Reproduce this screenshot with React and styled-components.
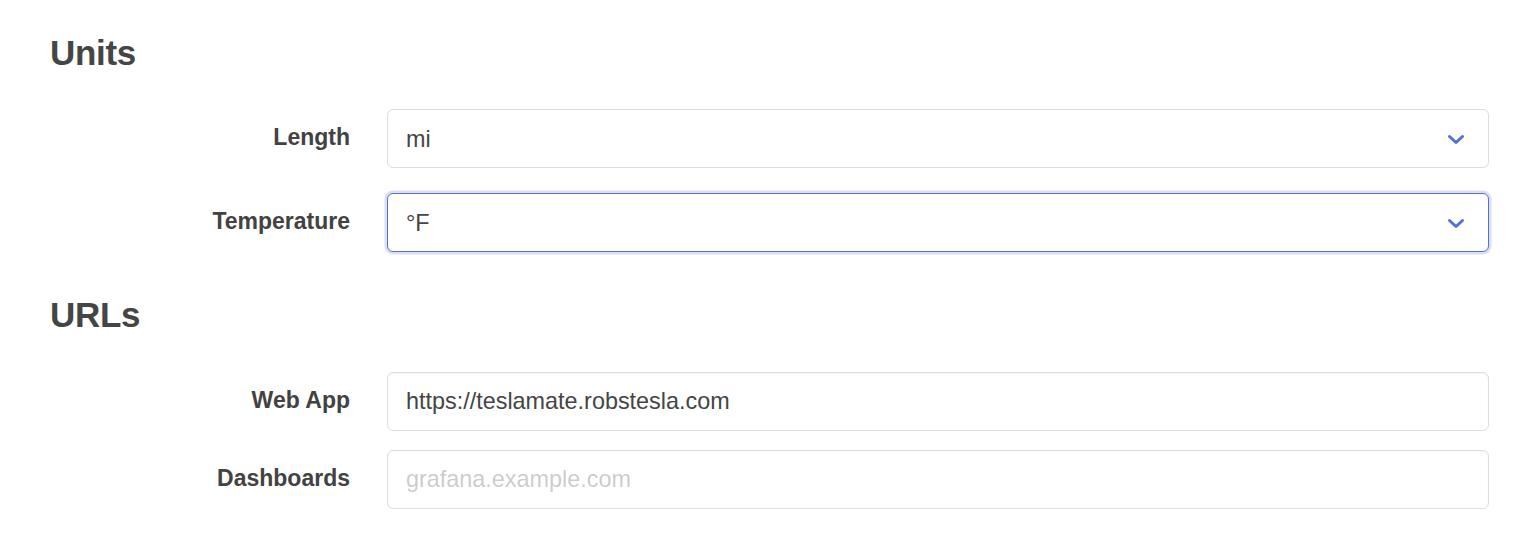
import React from 'react'
import styled, { createGlobalStyle } from 'styled-components'

const GlobalStyle = createGlobalStyle`
  html, body {
    margin: 0;
    padding: 0;
    background: #fff;
  }
  body {
    font-family: "Liberation Sans", Arial, Helvetica, sans-serif;
    color: #363636;
  }
  * {
    box-sizing: border-box;
  }
`

const Page = styled.main`
  padding: 33px 49px 0 50px;
`

const Section = styled.section`
  & + & {
    margin-top: 43px;
  }
`

const Title = styled.h2`
  margin: 0 0 37px 0;
  font-size: 35px;
  line-height: 1.125;
  font-weight: 700;
  color: #454545;
  letter-spacing: -0.3px;
`

const Field = styled.div`
  display: grid;
  grid-template-columns: 300px 1fr;
  column-gap: 37px;
  margin-bottom: ${(p) => p.$gap}px;

  &:last-child {
    margin-bottom: 0;
  }
`

const Label = styled.label`
  padding-top: 11px;
  text-align: right;
  font-size: 23px;
  line-height: 1.5;
  font-weight: 700;
  color: #424242;
`

const Control = styled.div`
  position: relative;
`

const baseBox = `
  display: block;
  width: 100%;
  height: 59px;
  margin: 0;
  padding: 0 18px;
  font-family: "Liberation Sans", Arial, Helvetica, sans-serif;
  font-size: 23.4px;
  color: #454545;
  background: #fff;
  border-radius: 6px;
  outline: none;
`

const Select = styled.select`
  ${baseBox}
  appearance: none;
  -webkit-appearance: none;
  border: 1px solid ${(p) => (p.$focused ? '#5a70d0' : '#dedede')};
  box-shadow: ${(p) => (p.$focused ? '0 0 0 2.5px rgba(72, 95, 199, 0.2)' : 'none')};
  padding-right: 60px;
`

const Arrow = styled.svg`
  position: absolute;
  right: 24px;
  top: 50%;
  width: 18px;
  height: 12px;
  margin-top: -5px;
  pointer-events: none;
`

const Input = styled.input`
  ${baseBox}
  border: 1px solid #dedede;
  box-shadow: inset 0 1px 2px rgba(10, 10, 10, 0.04);

  &::placeholder {
    color: rgba(54, 54, 54, 0.27);
  }
`

function Chevron() {
  return (
    <Arrow viewBox="0 0 18 12">
      <polyline
        points="2.5,2.5 9,8.5 15.5,2.5"
        fill="none"
        stroke="#5470d4"
        strokeWidth="3"
        strokeLinecap="round"
        strokeLinejoin="round"
      />
    </Arrow>
  )
}

function SelectField({ label, value, options, focused }) {
  return (
    <Field $gap={25}>
      <Label>{label}</Label>
      <Control>
        <Select defaultValue={value} $focused={focused}>
          {options.map((o) => (
            <option key={o}>{o}</option>
          ))}
        </Select>
        <Chevron />
      </Control>
    </Field>
  )
}

function TextField({ label, value, placeholder }) {
  return (
    <Field $gap={19}>
      <Label>{label}</Label>
      <Control>
        <Input type="text" defaultValue={value} placeholder={placeholder} />
      </Control>
    </Field>
  )
}

export default function App() {
  return (
    <>
      <GlobalStyle />
      <Page>
        <Section>
          <Title>Units</Title>
          <SelectField label="Length" value="mi" options={['km', 'mi']} />
          <SelectField label="Temperature" value="°F" options={['°C', '°F']} focused />
        </Section>
        <Section>
          <Title>URLs</Title>
          <TextField label="Web App" value="https://teslamate.robstesla.com" />
          <TextField label="Dashboards" placeholder="grafana.example.com" />
        </Section>
      </Page>
    </>
  )
}
